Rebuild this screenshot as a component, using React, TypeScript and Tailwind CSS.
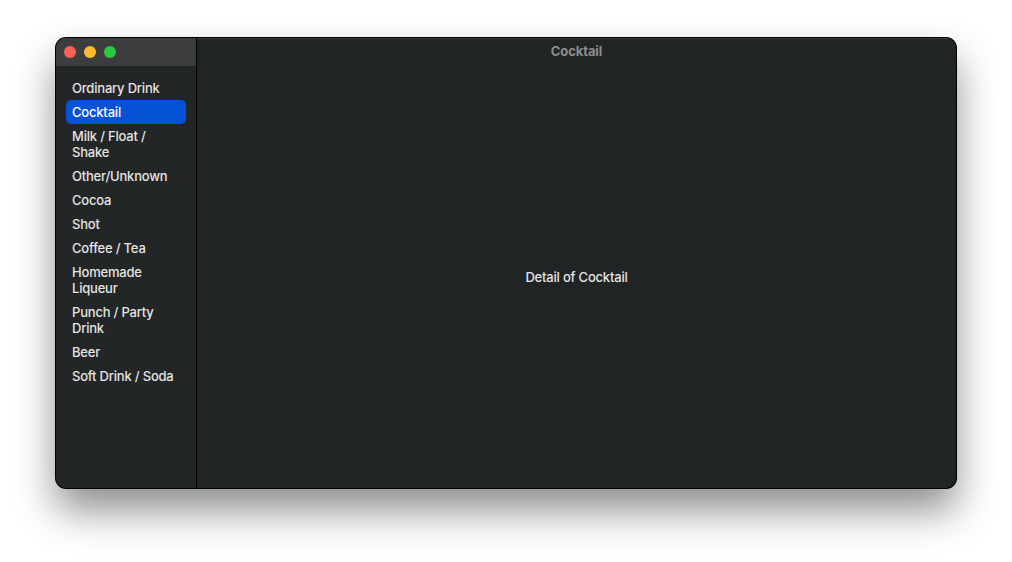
import React from 'react';

const categories = [
  'Ordinary Drink',
  'Cocktail',
  'Milk / Float / Shake',
  'Other/Unknown',
  'Cocoa',
  'Shot',
  'Coffee / Tea',
  'Homemade Liqueur',
  'Punch / Party Drink',
  'Beer',
  'Soft Drink / Soda',
];

export default function App() {
  const selected = 'Cocktail';
  return (
    <div className="w-[1012px] h-[562px] bg-white pt-[38px] pl-[56px] font-['Inter','Noto_Sans',sans-serif]">
      <div className="w-[900px] h-[450px] rounded-[10px] ring-1 ring-black bg-[#212424] shadow-[0_22px_40px_rgba(0,0,0,0.45)] flex overflow-hidden">
        <div className="w-[141px] shrink-0 flex flex-col bg-[#232626] border-r border-black shadow-[inset_0_1px_0_rgba(255,255,255,0.12)]">
          <div className="h-[28px] shrink-0 bg-[#3c3e3e] flex items-center gap-2 pl-[8px]">
            <span className="w-3 h-3 rounded-full bg-[#fe5f57]" />
            <span className="w-3 h-3 rounded-full bg-[#febc2e]" />
            <span className="w-3 h-3 rounded-full bg-[#28c840]" />
          </div>
          <ul className="px-[10px] pt-[10px] flex flex-col">
            {categories.map((c) => (
              <li
                key={c}
                className={`px-[6px] py-1 rounded-[5px] text-[13px] leading-4 tracking-[-0.2px] ${
                  c === selected ? 'bg-[#0652d6] text-white font-medium' : 'text-[#e3e4e4] font-medium'
                }`}
              >
                {c}
              </li>
            ))}
          </ul>
        </div>
        <div className="flex-1 flex flex-col shadow-[inset_0_1px_0_rgba(255,255,255,0.12)]">
          <div className="h-[28px] shrink-0 flex items-center justify-center text-[13px] font-bold text-[#8b8c8c] tracking-[-0.1px]">
            Cocktail
          </div>
          <div className="flex-1 flex items-center justify-center pt-[2px] text-[13px] font-medium text-[#e3e4e4] tracking-[-0.2px]">
            Detail of Cocktail
          </div>
        </div>
      </div>
    </div>
  );
}
